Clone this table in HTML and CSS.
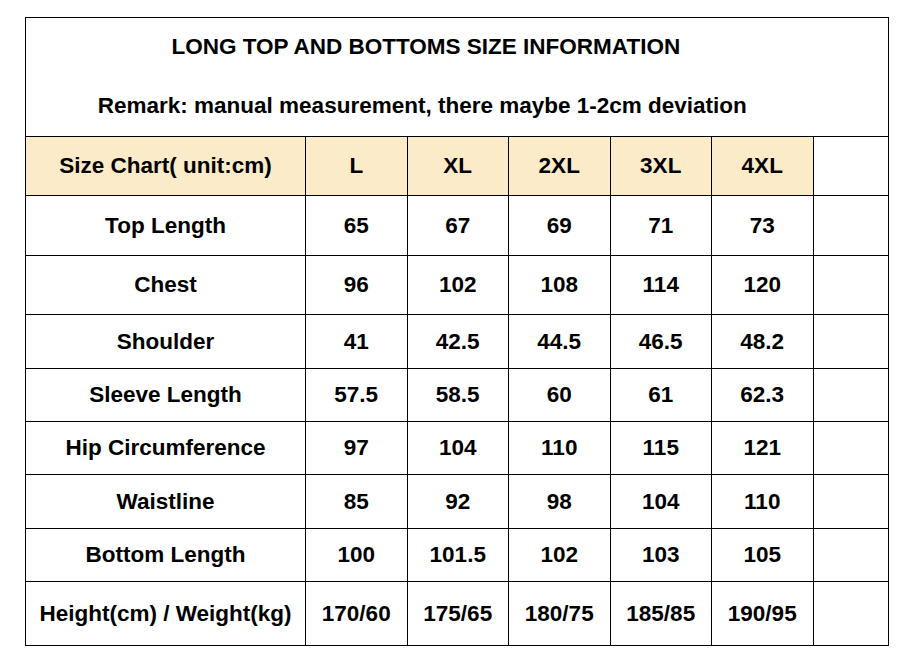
FILE: index.html
```html
<!DOCTYPE html>
<html>
<head>
<meta charset="utf-8">
<link rel="stylesheet" href="styles.css">
</head>
<body>
<table class="chart">
  <colgroup>
    <col class="c-label"><col class="c-size"><col class="c-size"><col class="c-size"><col class="c-size"><col class="c-size"><col class="c-empty">
  </colgroup>
  <tr>
    <td colspan="7" class="intro">
      <div class="title">LONG TOP AND BOTTOMS SIZE INFORMATION</div>
      <div class="remark">Remark: manual measurement, there maybe 1-2cm deviation</div>
    </td>
  </tr>
  <tr class="h58 hdr">
    <td>Size Chart( unit:cm)</td><td>L</td><td>XL</td><td>2XL</td><td>3XL</td><td>4XL</td><td class="blank"></td>
  </tr>
  <tr class="h59">
    <td>Top Length</td><td>65</td><td>67</td><td>69</td><td>71</td><td>73</td><td></td>
  </tr>
  <tr class="h58">
    <td>Chest</td><td>96</td><td>102</td><td>108</td><td>114</td><td>120</td><td></td>
  </tr>
  <tr class="h53">
    <td>Shoulder</td><td>41</td><td>42.5</td><td>44.5</td><td>46.5</td><td>48.2</td><td></td>
  </tr>
  <tr class="h52">
    <td>Sleeve Length</td><td>57.5</td><td>58.5</td><td>60</td><td>61</td><td>62.3</td><td></td>
  </tr>
  <tr class="h52">
    <td>Hip Circumference</td><td>97</td><td>104</td><td>110</td><td>115</td><td>121</td><td></td>
  </tr>
  <tr class="h53">
    <td>Waistline</td><td>85</td><td>92</td><td>98</td><td>104</td><td>110</td><td></td>
  </tr>
  <tr class="h52">
    <td>Bottom Length</td><td>100</td><td>101.5</td><td>102</td><td>103</td><td>105</td><td></td>
  </tr>
  <tr class="h63">
    <td>Height(cm) / Weight(kg)</td><td>170/60</td><td>175/65</td><td>180/75</td><td>185/85</td><td>190/95</td><td></td>
  </tr>
</table>
</body>
</html>
```
FILE: styles.css
```css
html, body {
  margin: 0;
  padding: 0;
  background: #ffffff;
}

body {
  padding: 17px 0 0 25px;
  font-family: "Liberation Sans", Arial, sans-serif;
  color: #000000;
}

.chart {
  border-collapse: collapse;
  table-layout: fixed;
  width: 863px;
  font-weight: bold;
  font-size: 22.5px;
}

.c-label { width: 280px; }
.c-size { width: 101.5px; }
.c-empty { width: 75px; }

.chart td {
  border: 1px solid #000000;
  padding: 0;
  text-align: center;
  vertical-align: middle;
  white-space: nowrap;
}

.intro {
  height: 118px;
  vertical-align: top !important;
}

.title {
  padding: 16px 62px 0 0;
  line-height: 25px;
}

.remark {
  padding: 34px 69px 0 0;
  line-height: 25px;
}

.h52 td { height: 52px; }
.h53 td { height: 53px; }
.h58 td { height: 58px; }
.h59 td { height: 59px; }
.h63 td { height: 63px; }

.hdr td {
  background: #fcebc8;
}

.hdr td.blank {
  background: #ffffff;
}
```
